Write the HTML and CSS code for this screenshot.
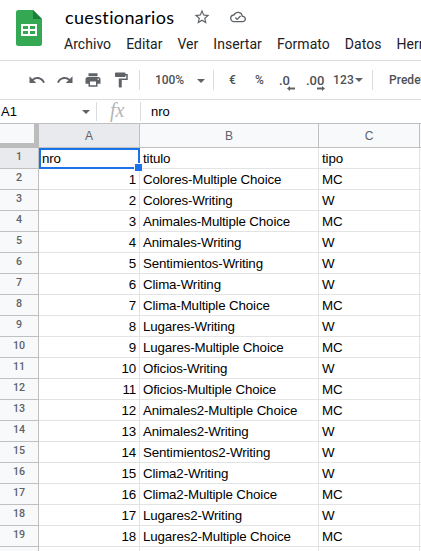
FILE: index.html
```html
<!DOCTYPE html>
<html lang="es">
<head>
<meta charset="utf-8">
<title>cuestionarios</title>
<link rel="stylesheet" href="styles.css">
</head>
<body>
<header class="top">
  <svg class="logo" width="26" height="36" viewBox="0 0 26 36"><path fill="#34a853" d="M2.500 0H17l9 9v24.500a2.500 2.500 0 0 1-2.500 2.500h-21A2.500 2.500 0 0 1 0 33.500v-31A2.500 2.500 0 0 1 2.500 0z"/><path fill="#188038" d="M17 0l9 9h-9z"/><path fill="#fff" fill-rule="evenodd" d="M5 14h16v12H5zM7 16v3h5v-3zM14 16v3h5v-3zM7 21v3h5v-3zM14 21v3h5v-3z"/></svg>
  <div class="heading">
    <div class="title-row">
      <span class="title">cuestionarios</span>
      <svg class="star" width="18" height="18" viewBox="0 0 24 24"><path fill="#5f6368" d="M22 9.240l-7.190-.620L12 2 9.190 8.630 2 9.240l5.460 4.730L5.820 21 12 17.270 18.180 21l-1.630-7.030L22 9.240zM12 15.400l-3.760 2.270 1-4.280-3.320-2.880 4.380-.380L12 6.100l1.710 4.040 4.380.380-3.320 2.880 1 4.280L12 15.400z"/></svg>
      <svg class="cloud" width="16" height="16" viewBox="0 0 24 24"><path fill="#5f6368" d="M19.350 10.040A7.490 7.490 0 0 0 12 4C9.110 4 6.600 5.640 5.350 8.040A5.994 5.994 0 0 0 0 14c0 3.310 2.690 6 6 6h13c2.760 0 5-2.240 5-5 0-2.640-2.050-4.780-4.650-4.960zM19 18H6a4 4 0 0 1-.440-7.980l1.070-.110.500-.950A5.470 5.470 0 0 1 12 6c2.620 0 4.880 1.860 5.390 4.430l.300 1.500 1.530.110A2.980 2.980 0 0 1 22 15c0 1.650-1.350 3-3 3zM10.800 14.100l-2-2-1.500 1.500 3.500 3.400 5.700-5.700-1.500-1.400z"/></svg>
    </div>
    <nav class="menu"><span>Archivo</span><span>Editar</span><span>Ver</span><span>Insertar</span><span>Formato</span><span>Datos</span><span>Herramientas</span></nav>
  </div>
</header>
<div class="toolbar">
  <div class="tools">
    <svg width="18" height="18" viewBox="0 0 24 24"><path d="M12.500 8c-2.650 0-5.050.990-6.900 2.600L2 7v9h9l-3.620-3.620c1.390-1.160 3.160-1.880 5.120-1.880 3.540 0 6.550 2.310 7.600 5.500l2.370-.780C21.080 11.030 17.150 8 12.500 8z"/></svg>
    <svg width="18" height="18" viewBox="0 0 24 24"><path d="M18.400 10.600C16.550 8.990 14.150 8 11.500 8c-4.650 0-8.580 3.030-9.960 7.220L3.900 16a8 8 0 0 1 7.600-5.500c1.950 0 3.730.720 5.120 1.880L13 16h9V7z"/></svg>
    <svg width="18" height="18" viewBox="0 0 24 24"><path d="M19 8H5c-1.660 0-3 1.340-3 3v6h4v4h12v-4h4v-6c0-1.660-1.340-3-3-3zm-3 11H8v-5h8v5zm3-7c-.550 0-1-.450-1-1s.450-1 1-1 1 .450 1 1-.450 1-1 1zM18 3H6v4h12z"/></svg>
    <svg width="18" height="18" viewBox="0 0 24 24"><path d="M18 4V3c0-.550-.450-1-1-1H5c-.550 0-1 .450-1 1v4c0 .550.450 1 1 1h12c.550 0 1-.450 1-1V6h1v4H9v11c0 .550.450 1 1 1h2c.550 0 1-.450 1-1v-9h8V4z"/></svg>
  </div>
  <i class="sep"></i>
  <span class="zoom">100%</span><i class="arrow zoom-arrow"></i>
  <i class="sep"></i>
  <span class="euro">€</span>
  <span class="percent">%</span>
  <span class="decimal less">.0<svg width="8" height="5" viewBox="0 0 8 5"><path d="M3 0v1.500h5v2H3V5L0 2.500z"/></svg></span>
  <span class="decimal more">.00<svg width="8" height="5" viewBox="0 0 8 5"><path d="M5 0v1.500H0v2h5V5l3-2.500z"/></svg></span>
  <span class="format">123</span><i class="arrow"></i>
  <i class="sep format-sep"></i>
  <span class="font-name">Predeterminado</span>
</div>
<div class="formula">
  <span class="name-box">A1</span><i class="arrow"></i>
  <span class="fx">fx</span>
  <span class="value">nro</span>
</div>
<table class="sheet">
  <colgroup><col class="col-head"><col class="col-a"><col class="col-b"><col class="col-c"><col class="col-d"></colgroup>
  <thead><tr><th class="corner"></th><th class="active">A</th><th>B</th><th>C</th><th class="edge"></th></tr></thead>
  <tbody>
    <tr><th class="active">1</th><td class="selected">nro</td><td>titulo</td><td>tipo</td><td class="edge"></td></tr>
    <tr><th>2</th><td class="num">1</td><td>Colores-Multiple Choice</td><td>MC</td><td class="edge"></td></tr>
    <tr><th>3</th><td class="num">2</td><td>Colores-Writing</td><td>W</td><td class="edge"></td></tr>
    <tr><th>4</th><td class="num">3</td><td>Animales-Multiple Choice</td><td>MC</td><td class="edge"></td></tr>
    <tr><th>5</th><td class="num">4</td><td>Animales-Writing</td><td>W</td><td class="edge"></td></tr>
    <tr><th>6</th><td class="num">5</td><td>Sentimientos-Writing</td><td>W</td><td class="edge"></td></tr>
    <tr><th>7</th><td class="num">6</td><td>Clima-Writing</td><td>W</td><td class="edge"></td></tr>
    <tr><th>8</th><td class="num">7</td><td>Clima-Multiple Choice</td><td>MC</td><td class="edge"></td></tr>
    <tr><th>9</th><td class="num">8</td><td>Lugares-Writing</td><td>W</td><td class="edge"></td></tr>
    <tr><th>10</th><td class="num">9</td><td>Lugares-Multiple Choice</td><td>MC</td><td class="edge"></td></tr>
    <tr><th>11</th><td class="num">10</td><td>Oficios-Writing</td><td>W</td><td class="edge"></td></tr>
    <tr><th>12</th><td class="num">11</td><td>Oficios-Multiple Choice</td><td>MC</td><td class="edge"></td></tr>
    <tr><th>13</th><td class="num">12</td><td>Animales2-Multiple Choice</td><td>MC</td><td class="edge"></td></tr>
    <tr><th>14</th><td class="num">13</td><td>Animales2-Writing</td><td>W</td><td class="edge"></td></tr>
    <tr><th>15</th><td class="num">14</td><td>Sentimientos2-Writing</td><td>W</td><td class="edge"></td></tr>
    <tr><th>16</th><td class="num">15</td><td>Clima2-Writing</td><td>W</td><td class="edge"></td></tr>
    <tr><th>17</th><td class="num">16</td><td>Clima2-Multiple Choice</td><td>MC</td><td class="edge"></td></tr>
    <tr><th>18</th><td class="num">17</td><td>Lugares2-Writing</td><td>W</td><td class="edge"></td></tr>
    <tr><th>19</th><td class="num">18</td><td>Lugares2-Multiple Choice</td><td>MC</td><td class="edge"></td></tr>
    <tr><th></th><td></td><td></td><td></td><td class="edge"></td></tr>
  </tbody>
</table>
</body>
</html>
```
FILE: styles.css
```css
* { box-sizing: border-box; }
html, body { margin: 0; width: 421px; height: 551px; overflow: hidden; background: #fff; }
body { font-family: Roboto, "Liberation Sans", sans-serif; color: #202124; }
svg { display: block; flex: none; }

.top { display: flex; height: 60px; padding-left: 16px; overflow: hidden; }
.logo { margin-top: 10px; }
.heading { margin-left: 22px; }
.title-row { display: flex; align-items: center; height: 34px; }
.title { width: 110px; padding-left: 1px; font: 18px/34px Lato, sans-serif; letter-spacing: 0.36px; color: #000; white-space: nowrap; }
.star { margin-left: 19px; }
.cloud { margin-left: 19px; }
.menu { display: flex; gap: 15px; font-size: 14px; line-height: 20px; letter-spacing: 0.04px; white-space: nowrap; }

.toolbar { display: flex; align-items: center; height: 40px; border-top: 1px solid #dadce0; border-bottom: 1px solid #dadce0; overflow: hidden; font-size: 12px; font-weight: 500; color: #4d5156; white-space: nowrap; }
.toolbar > * { flex: none; }
.tools { display: flex; gap: 10px; width: 139px; padding-left: 28px; }
.tools svg, .decimal svg { fill: #5f6368; }
.sep { width: 1px; height: 20px; background: #dadce0; }
.arrow { width: 0; height: 0; border: 4px solid transparent; border-top-color: #5f6368; border-bottom: 0; flex: none; }
.zoom { width: 30px; margin-left: 15px; letter-spacing: -0.1px; }
.zoom-arrow { margin: 1px 8px 0 12px; }
.euro { width: 12px; margin-left: 15px; }
.percent { width: 12px; margin-left: 14px; }
.decimal { position: relative; font-size: 13px; }
.decimal svg { position: absolute; right: -5px; bottom: -3px; }
.less { width: 11px; margin-left: 12px; }
.more { width: 18px; margin-left: 16px; }
.more svg { right: -1px; }
.format { width: 22px; margin-left: 9px; font-size: 12px; letter-spacing: 0.2px; }
.format-sep { margin-left: 9px; }
.font-name { margin-left: 16px; letter-spacing: 0.05px; }

.formula { display: flex; align-items: center; height: 23px; font: 13px "Liberation Sans", sans-serif; color: #000; }
.name-box { width: 82px; padding-left: 1px; }
.fx { width: 45px; height: 19px; margin-left: 6px; border: solid #dadce0; border-width: 0 1px; padding-left: 13px; font: italic 20px/17px "Liberation Serif", serif; color: #b4b6b9; }
.value { margin-left: 10px; }

.sheet { width: 421px; table-layout: fixed; border-collapse: separate; border-spacing: 0; border-top: 1px solid #c0c0c0; font: 13.333px/16px "Liberation Sans", sans-serif; letter-spacing: -0.14px; color: #000; }
.col-head { width: 39px; }
.col-a { width: 101px; }
.col-b { width: 179px; }
.col-c { width: 101px; }
.col-d { width: 1px; }
.sheet th { height: 21px; padding: 0; background: #f8f9fa; border: solid #c0c0c0; border-width: 0 1px 1px 0; color: #5f6368; font: 500 10.67px/16px Roboto, sans-serif; letter-spacing: 0; }
.sheet thead th { height: 24px; font: 12px/22px "Liberation Sans", sans-serif; }
.sheet th.active { background: #e8eaed; }
.sheet thead .corner { border: solid #bcbcbc; border-width: 0 5px 5px 0; }
.sheet tbody th { padding-bottom: 2px; }
.sheet td { height: 21px; padding: 3px 3px 1px; border: solid #e2e3e3; border-width: 0 1px 1px 0; white-space: nowrap; }
.sheet .edge { padding: 0; border-right: 0; }
.sheet .num { text-align: right; }
.selected { position: relative; }
.selected::before { content: ""; position: absolute; inset: 0 -1px -1px 0; border: 2px solid #1a73e8; }
.selected::after { content: ""; position: absolute; right: -3px; bottom: -3px; width: 7px; height: 7px; background: #1a73e8; border: solid #fff; border-width: 1px 0 0 1px; }
```
